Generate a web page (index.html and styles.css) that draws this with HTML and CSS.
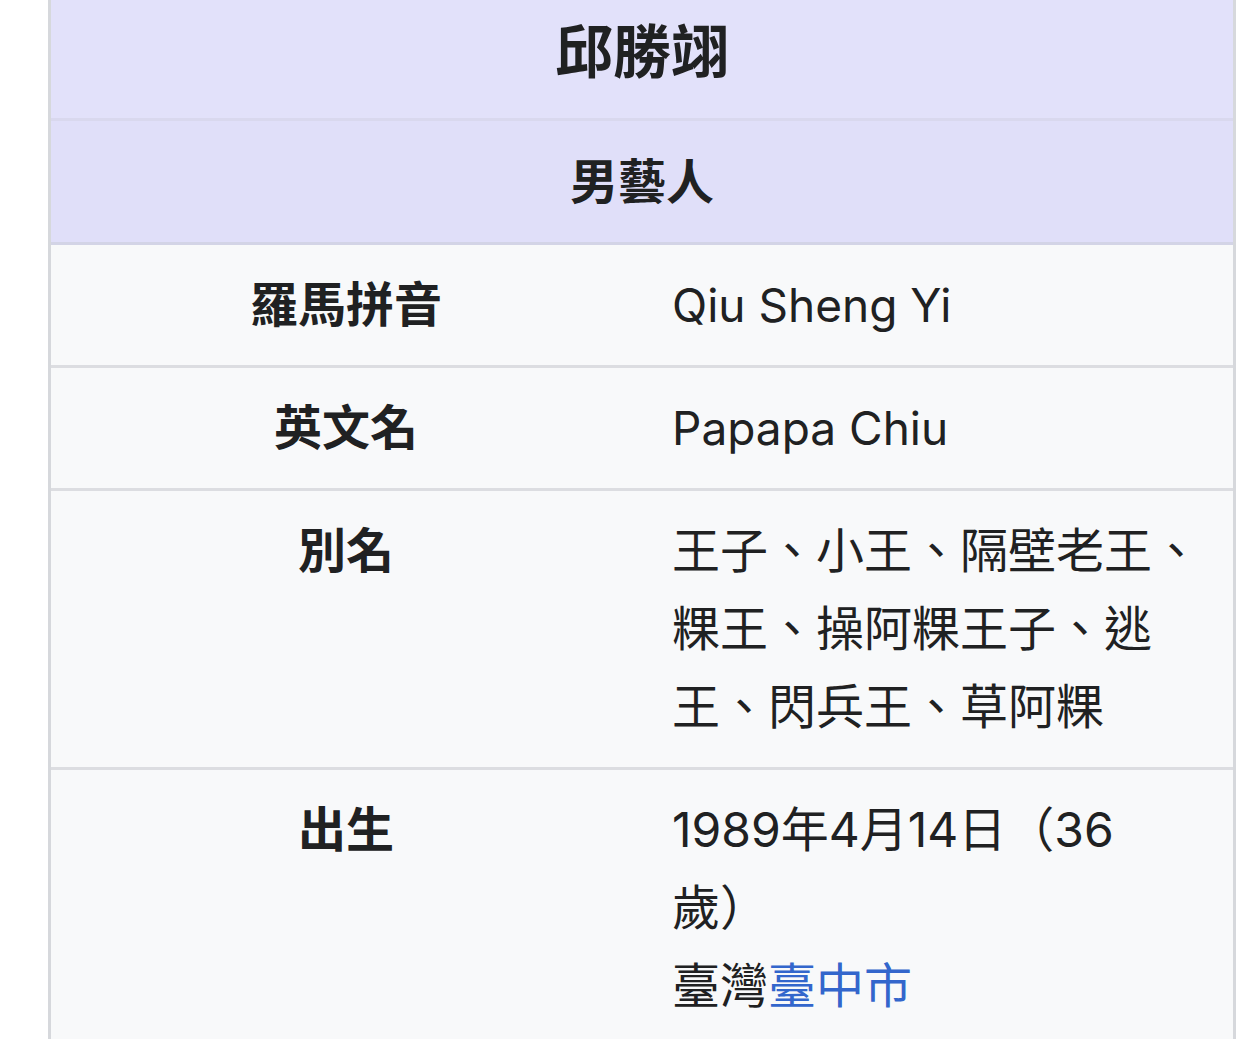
FILE: index.html
```html
<!DOCTYPE html>
<html lang="zh-Hant">
<head>
<meta charset="utf-8">
<title>邱勝翊</title>
<link rel="stylesheet" href="styles.css">
</head>
<body>
<div class="infobox">
  <div class="title">邱勝翊</div>
  <div class="header">男藝人</div>
  <div class="row">
    <div class="label">羅馬拼音</div>
    <div class="value latin">Qiu Sheng Yi</div>
  </div>
  <div class="row">
    <div class="label">英文名</div>
    <div class="value latin">Papapa Chiu</div>
  </div>
  <div class="row">
    <div class="label">別名</div>
    <div class="value">王子、小王、隔壁老王、粿王、操阿粿王子、逃王、閃兵王、草阿粿</div>
  </div>
  <div class="row">
    <div class="label">出生</div>
    <div class="value">1989年4月14日（36歲）<br>臺灣<a class="link" href="#">臺中市</a></div>
  </div>
</div>
</body>
</html>
```

FILE: styles.css
```css
html, body {
  margin: 0;
  padding: 0;
  background: #ffffff;
}
body {
  font-family: Inter, "Noto Sans CJK TC", sans-serif;
  color: #202122;
  height: 1039px;
  overflow: hidden;
}
.infobox {
  margin-left: 48px;
  width: 1182px;
  border-left: 3px solid #d6d8dc;
  border-right: 3px solid #d6d8dc;
  background: #f8f9fa;
}
.title {
  background: #e2e1fa;
  text-align: center;
  font-weight: 700;
  font-size: 58px;
  line-height: 88px;
  padding: 8px 0 22px;
  border-bottom: 3px solid #d9d8ee;
}
.header {
  background: #e0dff9;
  text-align: center;
  font-weight: 700;
  font-size: 48px;
  line-height: 78px;
  padding: 22px 0 21px;
  border-bottom: 3px solid #d3d4e6;
}
.row {
  display: grid;
  grid-template-columns: 590px 1fr;
  border-bottom: 3px solid #dcdde1;
}
.label {
  text-align: center;
  font-weight: 700;
  font-size: 48px;
  line-height: 78px;
  padding: 21px 33px;
}
.value {
  font-size: 48px;
  line-height: 78px;
  padding: 21px 30px 21px 31px;
}
.value.latin {
  font-size: 46px;
}
.link {
  color: #3366cc;
  text-decoration: none;
}
```
